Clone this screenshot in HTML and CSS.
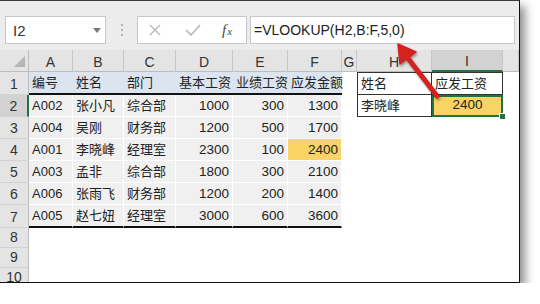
FILE: index.html
```html
<!DOCTYPE html>
<html lang="zh-CN">
  <head>
    <meta charset="UTF-8" />
    <title>VLOOKUP 查找</title>
    <link rel="stylesheet" href="styles.css">
  </head>
  <body>
    <div class="window">
      <!-- formula bar -->
      <div class="formula-bar">
        <div class="name-box">
          <span>I2</span>
          <svg width="8" height="5" viewBox="0 0 8 5"><path d="M0 0h8L4 5z" fill="#7a7a7a"/></svg>
        </div>
        <div class="grip"><i></i><i></i><i></i></div>
        <div class="fx-buttons">
          <svg class="btn-cancel" width="14" height="14" viewBox="0 0 14 14"><path d="M2 2l10 10M12 2L2 12" stroke="#b9b9b9" stroke-width="1.4"/></svg>
          <svg class="btn-enter" width="16" height="14" viewBox="0 0 16 14"><path d="M1 7l5 5L15 2" fill="none" stroke="#b9b9b9" stroke-width="1.6"/></svg>
          <span class="fx"><i>f</i><i class="x">x</i></span>
        </div>
        <div class="formula">=VLOOKUP(H2,B:F,5,0)</div>
      </div>

      <!-- sheet -->
      <div class="sheet">
        <div class="corner"><svg width="11" height="11" viewBox="0 0 11 11"><path d="M11 0v11H0z" fill="#b5b5b5"/></svg></div>
        <div class="ch">A</div><div class="ch">B</div><div class="ch">C</div><div class="ch">D</div><div class="ch">E</div>
        <div class="ch">F</div><div class="ch">G</div><div class="ch">H</div><div class="ch sel">I</div><div class="ch"></div>

        <div class="rh">1</div>
        <div class="c th">编号</div><div class="c th">姓名</div><div class="c th">部门</div>
        <div class="c th">基本工资</div><div class="c th">业绩工资</div><div class="c th">应发金额</div>
        <div class="c"></div>
        <div class="c lk first top">姓名</div><div class="c lk top">应发工资</div>
        <div class="c"></div>

        <div class="rh sel">2</div>
        <div class="c td">A002</div><div class="c td">张小凡</div><div class="c td">综合部</div>
        <div class="c td num">1000</div><div class="c td num">300</div><div class="c td num">1300</div>
        <div class="c"></div>
        <div class="c lk first">李晓峰</div><div class="c lk active">2400</div>
        <div class="c"></div>

        <div class="rh">3</div>
        <div class="c td">A004</div><div class="c td">吴刚</div><div class="c td">财务部</div>
        <div class="c td num">1200</div><div class="c td num">500</div><div class="c td num">1700</div>
        <div class="c"></div><div class="c"></div><div class="c"></div><div class="c"></div>

        <div class="rh">4</div>
        <div class="c td">A001</div><div class="c td">李晓峰</div><div class="c td">经理室</div>
        <div class="c td num">2300</div><div class="c td num">100</div><div class="c td num hl">2400</div>
        <div class="c"></div><div class="c"></div><div class="c"></div><div class="c"></div>

        <div class="rh">5</div>
        <div class="c td">A003</div><div class="c td">孟非</div><div class="c td">综合部</div>
        <div class="c td num">1800</div><div class="c td num">300</div><div class="c td num">2100</div>
        <div class="c"></div><div class="c"></div><div class="c"></div><div class="c"></div>

        <div class="rh">6</div>
        <div class="c td">A006</div><div class="c td">张雨飞</div><div class="c td">财务部</div>
        <div class="c td num">1200</div><div class="c td num">200</div><div class="c td num">1400</div>
        <div class="c"></div><div class="c"></div><div class="c"></div><div class="c"></div>

        <div class="rh">7</div>
        <div class="c td last">A005</div><div class="c td last">赵七妞</div><div class="c td last">经理室</div>
        <div class="c td last num">3000</div><div class="c td last num">600</div><div class="c td last num">3600</div>
        <div class="c"></div><div class="c"></div><div class="c"></div><div class="c"></div>

        <div class="rh">8</div>
        <div class="c"></div><div class="c"></div><div class="c"></div><div class="c"></div><div class="c"></div>
        <div class="c"></div><div class="c"></div><div class="c"></div><div class="c"></div><div class="c"></div>

        <div class="rh">9</div>
        <div class="c"></div><div class="c"></div><div class="c"></div><div class="c"></div><div class="c"></div>
        <div class="c"></div><div class="c"></div><div class="c"></div><div class="c"></div><div class="c"></div>

        <div class="rh">10</div>
        <div class="c"></div><div class="c"></div><div class="c"></div><div class="c"></div><div class="c"></div>
        <div class="c"></div><div class="c"></div><div class="c"></div><div class="c"></div><div class="c"></div>
      </div>

      <!-- red callout arrow -->
      <svg class="callout" width="519" height="282" viewBox="0 1 519 282">
        <path d="M437 96L407 57" stroke="#d6221e" stroke-width="5" stroke-linecap="round"/>
        <path d="M398 44L416 52L400 64z" fill="#d6221e" stroke="#d6221e" stroke-width="1.5" stroke-linejoin="round"/>
      </svg>
    </div>
  </body>
</html>
```

FILE: styles.css
```css
body {
  margin: 0;
  background: #fff;
  font-family: "Liberation Sans", "Noto Sans CJK SC", sans-serif;
}

.window {
  position: relative;
  width: 519px;
  height: 281px;
  border-top: 1px solid #3a3a3a;
  border-right: 1px solid #111;
  border-bottom: 1px solid #111;
  overflow: hidden;
  background: #fff;
  box-shadow: 5px 6px 9px rgba(0, 0, 0, 0.45);
}

/* Formula bar */
.formula-bar {
  display: flex;
  align-items: flex-start;
  height: 49px;
  box-sizing: border-box;
  padding: 15px 4px 0 5px;
  background: #ececec;
}

.name-box,
.fx-buttons,
.formula {
  height: 28px;
  box-sizing: border-box;
  border: 1px solid #c8c8c8;
  background: #fff;
}

.name-box {
  width: 101px;
  display: flex;
  align-items: center;
  justify-content: space-between;
  padding: 0 4px 0 7px;
  font-size: 15px;
  color: #333;
}

.grip {
  width: 31px;
  height: 28px;
  display: flex;
  flex-direction: column;
  align-items: center;
  justify-content: center;
  gap: 3px;
}

.grip i {
  width: 2px;
  height: 2px;
  border-radius: 50%;
  background: #a0a0a0;
}

.fx-buttons {
  width: 110px;
  display: flex;
  align-items: center;
  padding-left: 10px;
}

.btn-enter {
  margin-left: 23px;
}

.fx {
  margin-left: 21px;
  font-family: "Liberation Serif", serif;
  font-size: 15px;
  color: #444;
}

.fx .x {
  font-size: 11px;
  margin-left: 1px;
}

.formula {
  flex: 1;
  margin-left: 3px;
  padding-left: 3px;
  font-size: 14px;
  line-height: 26px;
  color: #222;
  white-space: nowrap;
}

/* Sheet grid */
.sheet {
  display: grid;
  grid-template-columns: 29px 44px 51px 52px 57px 55px 54px 15px 75px 71px 1fr;
  grid-template-rows: 22px 23px repeat(5, 22px) 23px repeat(3, 20px);
}

.corner {
  display: flex;
  align-items: flex-end;
  justify-content: flex-end;
  padding: 0 3px 4px 0;
  background: #e4e4e4;
  border-right: 1px solid #bdbdbd;
  border-bottom: 1px solid #bdbdbd;
}

.ch {
  display: flex;
  align-items: center;
  justify-content: center;
  padding-top: 2px;
  background: #e4e4e4;
  border-right: 1px solid #c6c6c6;
  border-bottom: 1px solid #bdbdbd;
  font-size: 14px;
  color: #333;
}

.ch.sel {
  background: #d2d2d2;
  border-bottom: 2px solid #217346;
}

.rh {
  display: flex;
  align-items: flex-end;
  justify-content: center;
  padding-bottom: 2px;
  background: #e4e4e4;
  border-right: 1px solid #bdbdbd;
  border-bottom: 1px solid #d2d2d2;
  font-size: 14px;
  color: #333;
}

.rh.sel {
  background: #d2d2d2;
  border-right: 2px solid #217346;
}

.c {
  display: flex;
  align-items: flex-end;
  padding: 0 3px 2px;
  font-size: 13px;
  line-height: 16px;
  color: #222;
  white-space: nowrap;
  min-width: 0;
}

.th {
  background: #dbe4ef;
  border-bottom: 2px solid #111;
}

.td {
  background: #f0f0f0;
  border-right: 1px solid #fff;
  border-bottom: 1px solid #fff;
}

.td.last {
  border-bottom: 2px solid #111;
}

.num {
  justify-content: flex-end;
  font-size: 13.5px;
}

.hl {
  background: #f8d466;
}

/* Lookup box H1:I2 */
.lk {
  border-right: 1px solid #333;
  border-bottom: 1px solid #333;
}

.lk.first {
  border-left: 1px solid #333;
}

.lk.top {
  border-top: 1px solid #333;
}

.lk.active {
  position: relative;
  justify-content: center;
  background: #f8d466;
  border: 2px solid #217346;
  font-size: 13.5px;
}

.lk.active::after {
  content: "";
  position: absolute;
  right: -5px;
  bottom: -5px;
  width: 5px;
  height: 5px;
  background: #217346;
  border: 1px solid #fff;
}

.callout {
  position: absolute;
  top: 0;
  left: 0;
  pointer-events: none;
  filter: drop-shadow(1px 2px 1px rgba(0, 0, 0, 0.35));
}
```
